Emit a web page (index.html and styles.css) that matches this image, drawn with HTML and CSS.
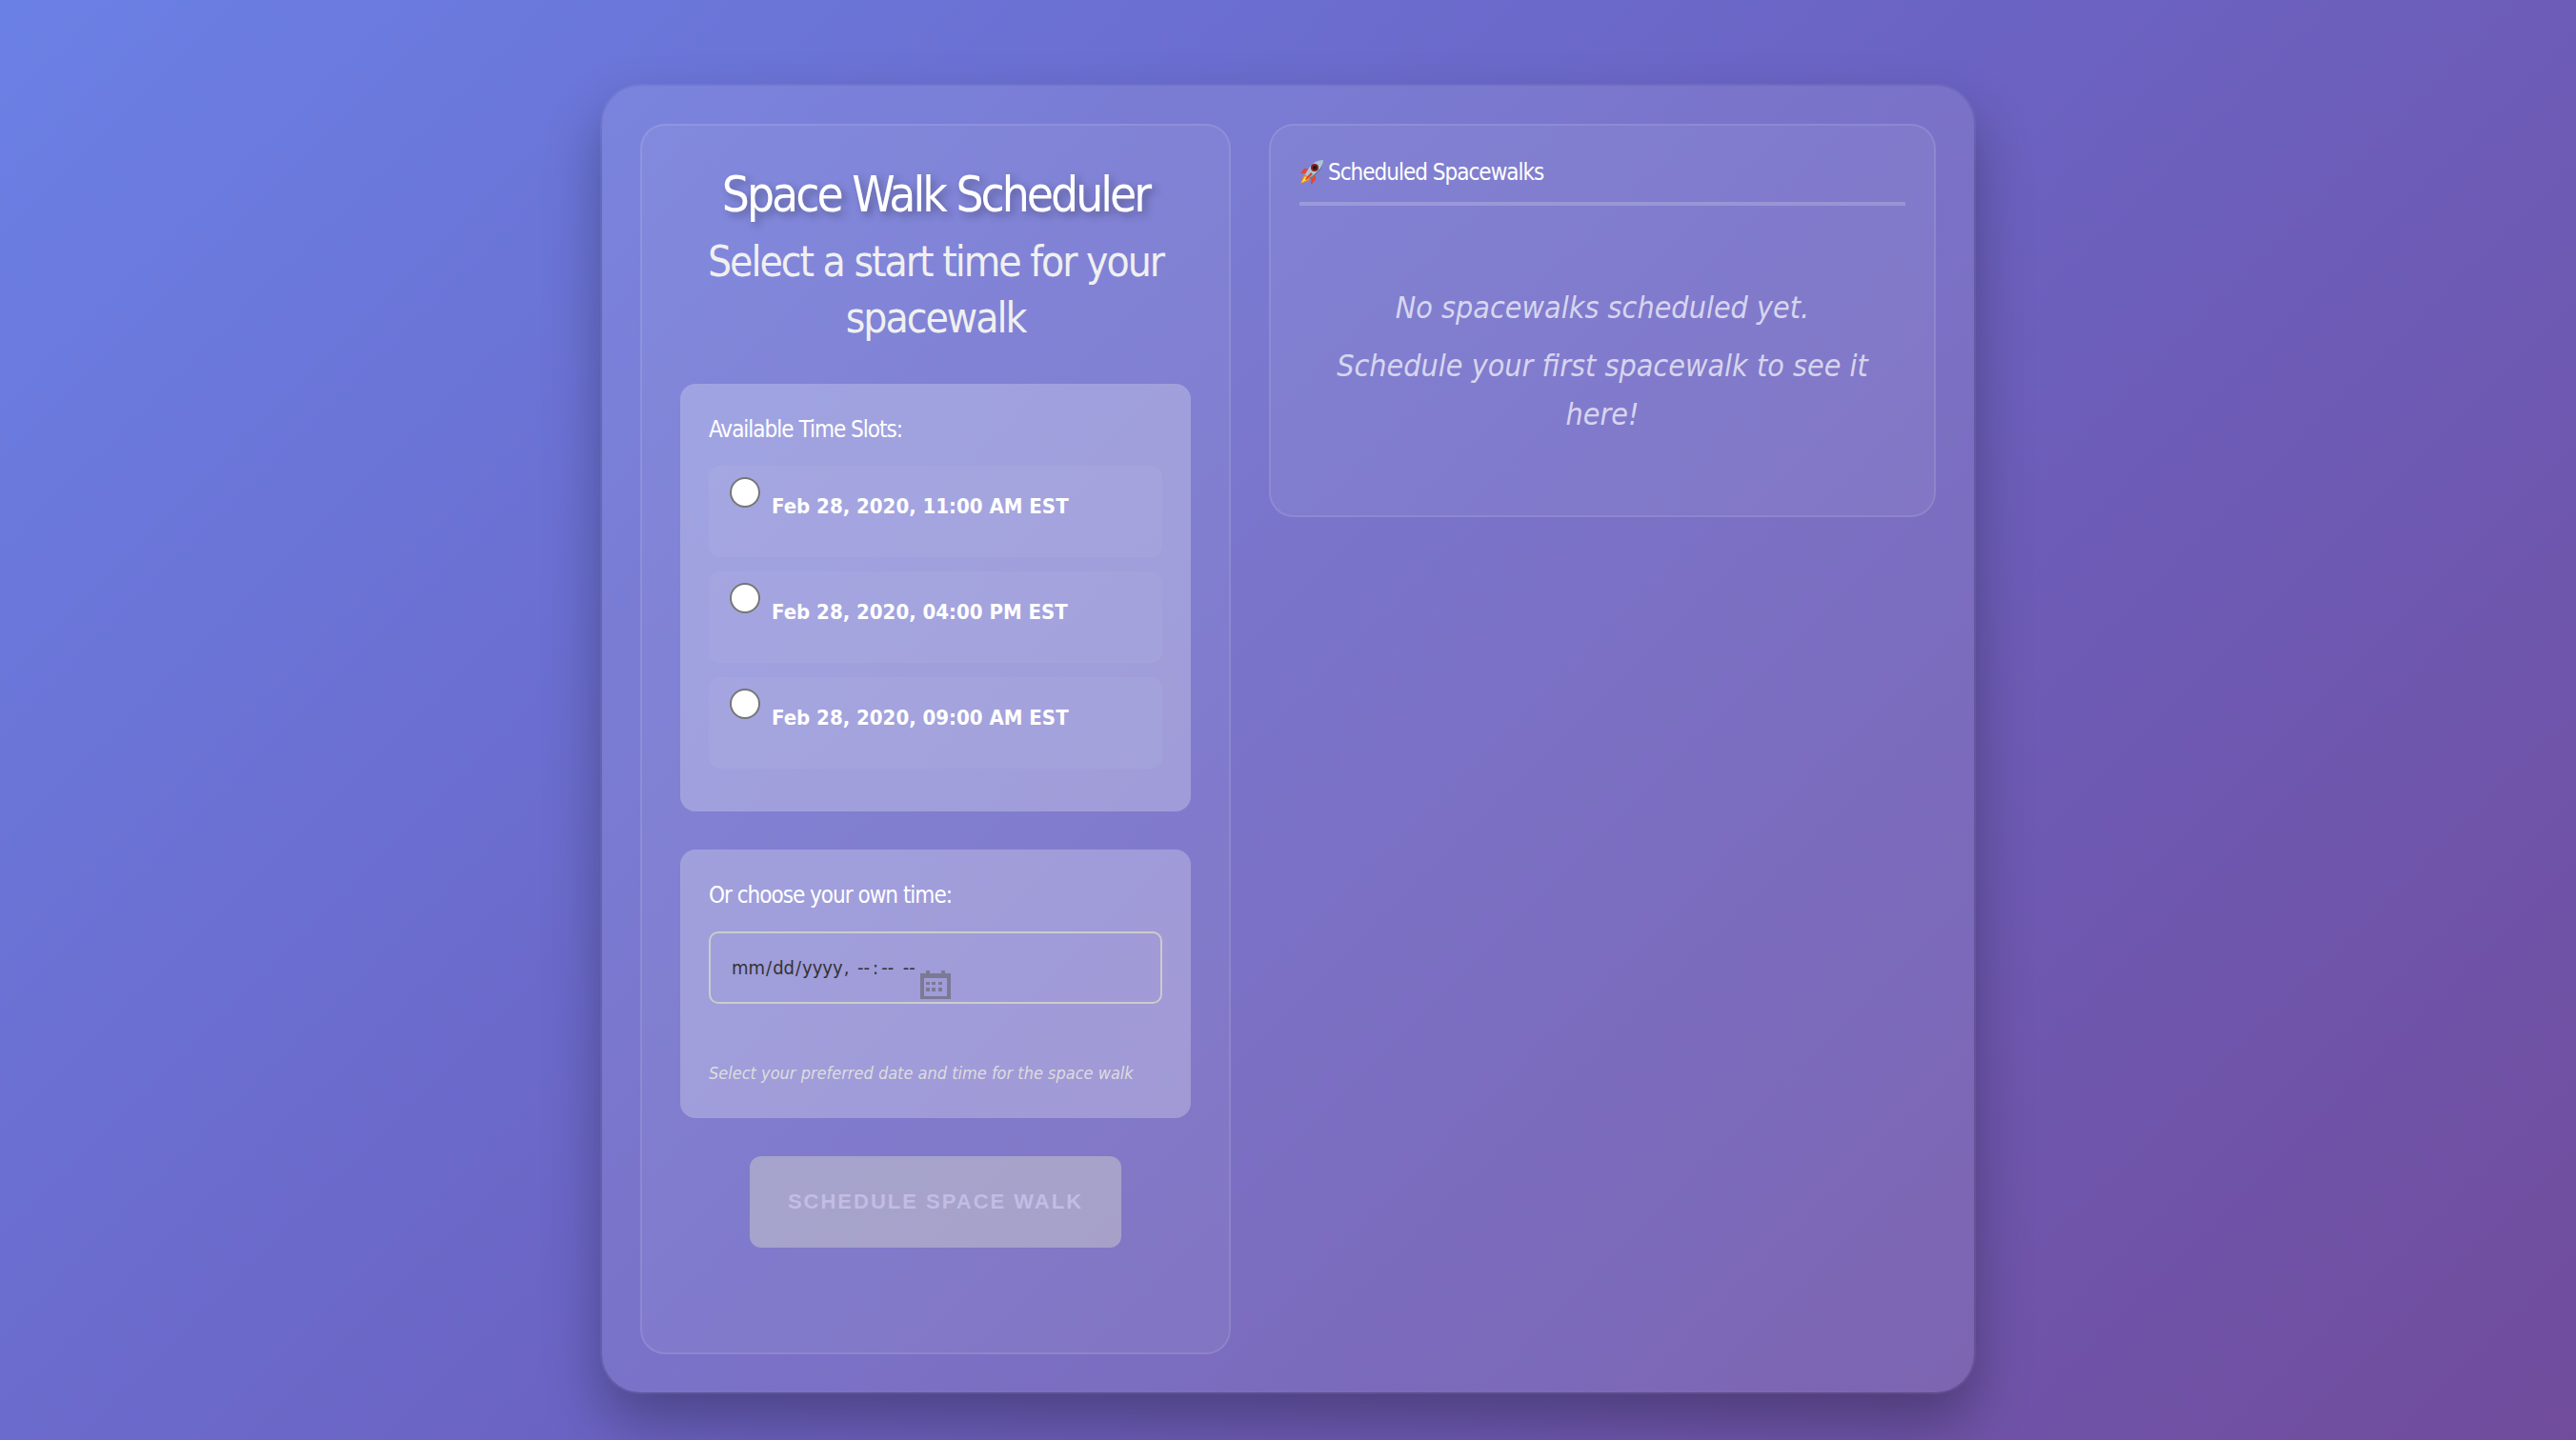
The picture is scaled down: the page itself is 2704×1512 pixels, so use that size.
FILE: index.html
```html
<!DOCTYPE html>
<html lang="en">
<head>
<meta charset="utf-8">
<meta name="viewport" content="width=device-width, initial-scale=1">
<title>Space Walk Scheduler</title>
<link rel="stylesheet" href="styles.css">
</head>
<body>
<main class="app">
  <form class="panel scheduler">
    <header class="intro">
      <h1 class="title">Space Walk Scheduler</h1>
      <h2 class="subtitle">Select a start time for your spacewalk</h2>
    </header>
    <fieldset class="card">
      <legend class="card-label">Available Time Slots:</legend>
      <label class="slot"><input class="slot-radio" type="radio" name="slot" value="11:00"><span class="slot-text">Feb 28, 2020, 11:00 AM EST</span></label>
      <label class="slot"><input class="slot-radio" type="radio" name="slot" value="16:00"><span class="slot-text">Feb 28, 2020, 04:00 PM EST</span></label>
      <label class="slot"><input class="slot-radio" type="radio" name="slot" value="09:00"><span class="slot-text">Feb 28, 2020, 09:00 AM EST</span></label>
    </fieldset>
    <div class="card">
      <label class="card-label" for="custom-time">Or choose your own time:</label>
      <div class="field">
        <input class="date-input" type="datetime-local" id="custom-time" aria-describedby="hint">
        <svg class="calendar" viewBox="0 0 32 30" aria-hidden="true">
          <path fill="#7c7995" fill-rule="evenodd" d="M6 0h4v3h12V0h4v3h6v27H0V3h6zM4 8v19h24V8z"/>
          <path fill="#7c7995" d="M6 12h4v3H6zM12 12h4v3h-4zM19 12h4v3h-4zM6 18h4v4H6zM12 18h4v4h-4zM19 18h4v4h-4z"/>
        </svg>
      </div>
      <p class="hint" id="hint">Select your preferred date and time for the space walk</p>
    </div>
    <button class="submit" type="submit" disabled>Schedule Space Walk</button>
  </form>
  <section class="panel scheduled">
    <h2 class="scheduled-title">
      <svg class="rocket" viewBox="0 0 26 26" aria-hidden="true">
        <path fill="#e04a35" d="M10 9 5 9 1 14l6 0zM17 16l0 5-5 5 0-7z"/>
        <path fill="#f08a24" d="M7 14 4 17 1 25l8-3 3-3z"/>
        <path fill="#ffe14d" d="M6 17l-4 7 7-4z"/>
        <path fill="#a9c6d8" d="M25 0c-7 0-12 4-16 10l-3 5 5 5 4-3c6-4 10-9 10-17z"/>
        <path fill="#56718c" d="M25 0c0 6-5 13-15 19l1 1 4-3c6-4 10-9 10-17z"/>
        <circle cx="16" cy="8" r="4" fill="#8c1d1d"/>
        <circle cx="16" cy="8" r="2" fill="#1c1518"/>
        <path fill="#e2402f" d="M12 13l-6 7 1 1 7-6z"/>
      </svg>
      Scheduled Spacewalks
    </h2>
    <div class="empty">
      <p>No spacewalks scheduled yet.</p>
      <p>Schedule your first spacewalk to see it here!</p>
    </div>
  </section>
</main>
</body>
</html>
```
FILE: styles.css
```css
* { box-sizing: border-box; }

body {
  margin: 0;
  min-height: 100vh;
  padding: 90px 40px 48px;
  font-family: "DejaVu Sans Condensed", "DejaVu Sans", sans-serif;
  color: #fff;
  background: linear-gradient(135deg, #6b80e5 0%, #6b63c3 50%, #714c9c 100%);
}

h1, h2, p { margin: 0; font-weight: 400; }

.app {
  display: grid;
  grid-template-columns: 31fr 35fr;
  gap: 40px;
  align-items: start;
  max-width: 1440px;
  margin: 0 auto;
  padding: 40px;
  border-radius: 40px;
  background: rgba(255, 255, 255, 0.1);
  box-shadow: 0 0 0 2px rgba(255, 255, 255, 0.06), 0 30px 60px rgba(0, 0, 0, 0.3);
}

.panel {
  border: 2px solid rgba(255, 255, 255, 0.1);
  border-radius: 26px;
  background: rgba(255, 255, 255, 0.06);
}

.scheduler {
  display: flex;
  flex-direction: column;
  gap: 40px;
  padding: 40px 40px 110px;
}

.intro { text-align: center; }

.title {
  font-size: 51px;
  line-height: 66px;
  letter-spacing: -3px;
  text-shadow: 4px 4px 8px rgba(0, 0, 0, 0.3);
}

.subtitle {
  padding-top: 7px;
  font-size: 44px;
  line-height: 59px;
  letter-spacing: -2px;
  color: #f0f0f0;
}

.card {
  display: flex;
  flex-direction: column;
  margin: 0;
  padding: 30px;
  border: 0;
  border-radius: 16px;
  background: rgba(255, 255, 255, 0.25);
}

.card-label {
  float: left;
  margin-bottom: 20px;
  padding: 0;
  font-size: 24px;
  line-height: 36px;
  letter-spacing: -1px;
}

.slot {
  display: flex;
  gap: 12px;
  height: 96px;
  margin-bottom: 15px;
  padding: 12px 22px;
  border-radius: 12px;
  background: rgba(255, 255, 255, 0.05);
}

.slot-radio {
  appearance: none;
  width: 32px;
  height: 32px;
  margin: 0;
  border: 2px solid #767676;
  border-radius: 50%;
  background: #fff;
}

.slot-text {
  padding-top: 16px;
  font-size: 22px;
  line-height: 30px;
  font-weight: 700;
}

.field { position: relative; }

.date-input {
  display: block;
  width: 100%;
  height: 76px;
  padding: 0 21px;
  border: 2px solid #ccc;
  border-radius: 10px;
  background: transparent;
  color: #333;
  font: 20px/26px "DejaVu Sans Condensed", "DejaVu Sans", sans-serif;
}

.date-input::-webkit-calendar-picker-indicator { opacity: 0; }
.date-input::-webkit-datetime-edit-hour-field,
.date-input::-webkit-datetime-edit-minute-field,
.date-input::-webkit-datetime-edit-ampm-field { padding: 0 3px; }

.calendar {
  position: absolute;
  left: 222px;
  top: 41px;
  width: 32px;
  height: 30px;
}

.hint {
  padding-top: 56px;
  font-size: 18px;
  line-height: 34px;
  font-style: italic;
  color: #ddd;
}

.submit {
  align-self: center;
  padding: 34px 40px;
  border: 0;
  border-radius: 12px;
  background: rgba(204, 204, 204, 0.5);
  color: #c2bde4;
  font: 700 22px/28px "Liberation Sans", sans-serif;
  letter-spacing: 2px;
  text-transform: uppercase;
}

.scheduled { padding: 30px; }

.scheduled-title {
  display: flex;
  align-items: center;
  gap: 4px;
  padding-bottom: 12px;
  border-bottom: 4px solid rgba(255, 255, 255, 0.2);
  font-size: 24px;
  line-height: 38px;
  letter-spacing: -1px;
}

.rocket { width: 26px; height: 26px; }

.empty {
  display: flex;
  flex-direction: column;
  gap: 10px;
  padding: 82px 30px 50px;
  text-align: center;
  font-size: 32px;
  line-height: 51px;
  font-style: italic;
  color: rgba(255, 255, 255, 0.7);
}
```
